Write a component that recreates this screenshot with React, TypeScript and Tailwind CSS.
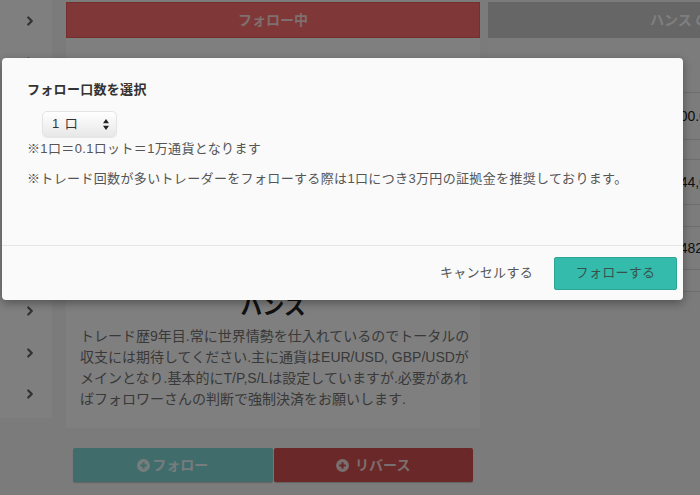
import React from 'react';
import { ChevronRight } from 'lucide-react';

const font = "font-['Liberation_Sans','Noto_Sans_CJK_JP',sans-serif]";

const PlusCircle: React.FC<{ color: string }> = ({ color }) => (
  <svg width="13" height="13" viewBox="0 0 14 14" className="mr-[2px]">
    <circle cx="7" cy="7" r="7" fill="currentColor" />
    <path d="M7 3.5v7M3.5 7h7" stroke={color} strokeWidth="2.2" />
  </svg>
);

const Sidebar = () => (
  <div className="flex h-[418px] w-[52px] shrink-0 flex-col bg-white">
    {Array.from({ length: 10 }).map((_, i) => (
      <div key={i} className="flex h-[41.5px] items-center justify-end pr-[15px] text-[#666]">
        <ChevronRight size={14} strokeWidth={4} />
      </div>
    ))}
  </div>
);

const MainColumn = () => (
  <div className="ml-[14px] flex w-[414px] shrink-0 flex-col pt-[2px]">
    <div className="flex h-[36px] items-center justify-center border border-[#e85c5c] bg-[#fe6e6e] text-[14px] font-bold text-[#ffdede]">
      フォロー中
    </div>
    <div className="flex h-[390px] flex-col bg-white px-[14px]">
      <div className="mx-auto mt-[40px] h-[160px] w-[160px] rounded-full bg-[#e9e9e9]" />
      <div className="mt-[56px] text-center text-[22px] font-bold leading-[26px] text-[#222]">ハンス</div>
      <p className="mt-[6px] whitespace-nowrap text-[14px] leading-[21px] text-[#727272]">
        トレード歴9年目.常に世界情勢を仕入れているのでトータルの
        <br />
        収支には期待してください.主に通貨はEUR/USD, GBP/USDが
        <br />
        メインとなり.基本的にT/P,S/Lは設定していますが.必要があれ
        <br />
        ばフォロワーさんの判断で強制決済をお願いします.
      </p>
    </div>
    <div className="mt-[20px] flex gap-[1px] px-[7px]">
      <button className="flex h-[34px] flex-1 items-center justify-center rounded-[2px] bg-[#80d8d8] text-[14px] font-bold text-[#eef8f8] shadow-[0_1px_1px_rgba(0,0,0,0.2)]">
        <PlusCircle color="#80d8d8" />
        フォロー
      </button>
      <button className="flex h-[34px] flex-1 items-center justify-center rounded-[2px] bg-[#d45050] text-[14px] font-bold text-[#f4dcdc] shadow-[0_1px_1px_rgba(0,0,0,0.2)]">
        <PlusCircle color="#d45050" />
        <span className="ml-[4px]">リバース</span>
      </button>
    </div>
  </div>
);

const rows = [
  { h: 'h-[55px]', value: '' },
  { h: 'h-[47px]', value: '100.0%' },
  { h: 'h-[20px]', value: '' },
  { h: 'h-[45px]', value: '144,000' },
  { h: 'h-[22px]', value: '' },
  { h: 'h-[43px]', value: '¥482,000' },
  { h: 'h-[22px]', value: '' },
];

const StatsColumn = () => (
  <div className="ml-[8px] flex w-[330px] shrink-0 flex-col pt-[2px]">
    <div className="flex h-[36px] items-center bg-[#cccccc] pl-[162px] text-[14px] font-bold text-white">
      ハンス の成績
    </div>
    <div className="flex flex-col bg-[#f8f8f8]">
      {rows.map((r, i) => (
        <div key={i} className={`flex ${r.h} items-center border-b border-[#dcdcdc] text-[14px] text-[#333]`}>
          {i === 0 ? (
            <>
              <span className="w-[124px] pt-[6px] text-center">1日</span>
              <span className="w-[56px] pt-[6px] text-center">1週間</span>
            </>
          ) : (
            <span className="pl-[184px] text-[14px] text-[#222]">{r.value}</span>
          )}
        </div>
      ))}
    </div>
  </div>
);

export default function App() {
  return (
    <div className={`relative h-[495px] w-[700px] overflow-hidden bg-[#f6f6f6] ${font}`}>
      <div className="flex">
        <Sidebar />
        <MainColumn />
        <StatsColumn />
      </div>

      <div className="absolute inset-0 bg-black/50" />

      <div className="absolute left-[2px] top-[58px] w-[681px] rounded-[4px] bg-[#fafafa] shadow-[0_3px_10px_rgba(0,0,0,0.35)]">
        <div className="flex h-[188px] flex-col border-b border-[#e6e6e6] pl-[25px] pt-[22px]">
          <div className="text-[13px] font-bold leading-[20px] tracking-[0.3px] text-[#333]">フォロー口数を選択</div>
          <div className="ml-[15px] mt-[11px] flex h-[26px] w-[75px] items-center justify-between rounded-[5px] border border-[#e4e4e4] bg-linear-to-b from-white to-[#e8e8e8] pl-[9px] pr-[7px] text-[13px] text-[#333] shadow-[0_1px_1px_rgba(0,0,0,0.08)]">
            <span className="tracking-[1px]">1 口</span>
            <svg width="6" height="11" viewBox="0 0 6 11">
              <path d="M3 0L6 4.2H0Z M3 11L0 6.8H6Z" fill="#222" />
            </svg>
          </div>
          <div className="mt-[2px] text-[13px] leading-[20px] tracking-[0.35px] text-[#555]">※1口＝0.1ロット＝1万通貨となります</div>
          <div className="mt-[10px] text-[13px] leading-[20px] tracking-[0.35px] text-[#555]">
            ※トレード回数が多いトレーダーをフォローする際は1口につき3万円の証拠金を推奨しております。
          </div>
        </div>
        <div className="flex h-[54px] items-center justify-end pr-[6px]">
          <button className="mr-[21px] text-[13px] tracking-[0.3px] text-[#555]">キャンセルする</button>
          <button className="h-[33px] w-[123px] rounded-[2px] border border-[#2ca597] bg-[#35bbac] text-[13px] tracking-[0.3px] text-[#35524f]">
            フォローする
          </button>
        </div>
      </div>
    </div>
  );
}
